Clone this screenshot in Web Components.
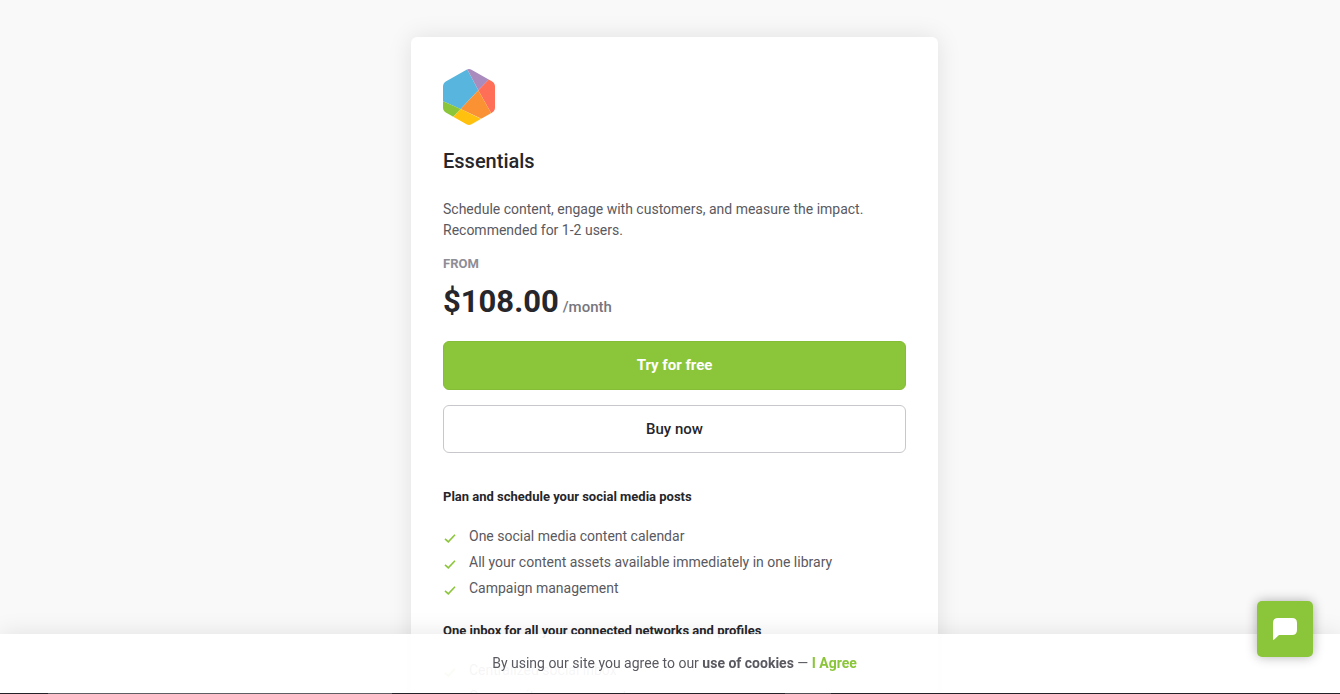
<!DOCTYPE html>
<html lang="en">
<head>
<meta charset="utf-8">
<meta name="viewport" content="width=device-width, initial-scale=1">
<title>Essentials plan</title>
<style>
  html { scrollbar-width: none; background: #f9f9f9; }
  body {
    margin: 0;
    font: 14px/21px Roboto, "Liberation Sans", sans-serif;
    color: #5a5960;
    --ink: #26262b;
    --green: #8bc53a;
    --gutter: 9px;
  }
</style>
</head>
<body>
<pricing-page>
  <plan-card>
    <plan-logo slot="logo"></plan-logo>
    <span slot="name">Essentials</span>
    <span slot="summary">Schedule content, engage with customers, and measure the impact. Recommended for 1-2 users.</span>
    <span slot="price">$108.00</span>
    <span slot="period">/month</span>
    <action-button slot="actions" primary>Try for free</action-button>
    <action-button slot="actions">Buy now</action-button>
    <feature-group>
      <span slot="title">Plan and schedule your social media posts</span>
      <feature-item>One social media content calendar</feature-item>
      <feature-item>All your content assets available immediately in one library</feature-item>
      <feature-item>Campaign management</feature-item>
    </feature-group>
    <feature-group>
      <span slot="title">One inbox for all your connected networks and profiles</span>
      <feature-item>Centralized social inbox</feature-item>
      <feature-item>Community management</feature-item>
    </feature-group>
  </plan-card>
</pricing-page>
<cookie-bar></cookie-bar>
<chat-launcher></chat-launcher>

<script>
  const define = (name, html) => {
    const template = document.createElement('template');
    template.innerHTML = html;
    customElements.define(name, class extends HTMLElement {
      constructor() {
        super();
        this.attachShadow({ mode: 'open' }).append(template.content.cloneNode(true));
      }
    });
  };

  define('pricing-page', `
    <style>
      :host { display: block; }
      main { display: flex; justify-content: center; padding: 37px 0 48px var(--gutter); }
    </style>
    <main><slot></slot></main>`);

  define('plan-card', `
    <style>
      :host {
        display: block; box-sizing: border-box; width: 100%; max-width: 527px;
        padding: 32px; border-radius: 6px; background: #fff;
        box-shadow: 0 0 24px rgba(0, 0, 0, .1);
      }
      h1 { margin: 24px 0 26px; font-size: 20px; line-height: 24px; font-weight: 500; color: var(--ink); }
      p { margin: 0; }
      .from { margin-top: 12px; font-size: 13px; line-height: 21px; font-weight: 700; color: #8e8d96; }
      .price { display: flex; align-items: baseline; gap: 4px; margin-top: 8px; line-height: 40px; }
      .amount { font-size: 31px; font-weight: 700; color: var(--ink); }
      .period { font-size: 15px; font-weight: 500; color: #77767c; }
      .actions { display: grid; gap: 15px; margin: 14px 0 33px; }
      .features { display: grid; gap: 21px; }
    </style>
    <slot name="logo"></slot>
    <h1><slot name="name"></slot></h1>
    <p><slot name="summary"></slot></p>
    <p class="from">FROM</p>
    <p class="price"><span class="amount"><slot name="price"></slot></span><span class="period"><slot name="period"></slot></span></p>
    <div class="actions"><slot name="actions"></slot></div>
    <div class="features"><slot></slot></div>`);

  define('plan-logo', `
    <style>
      :host { display: block; width: 52px; height: 56px; }
      svg { display: block; }
    </style>
    <svg width="52" height="56" viewBox="0 0 52 56" aria-hidden="true">
      <defs><clipPath id="hex"><path d="M23.500.7Q26-.7 28.500.7L48.800 12.200Q52 14 52 17.500V38.500Q52 42 48.800 43.800L28.500 55.300Q26 56.700 23.500 55.300L3.200 43.800Q0 42 0 38.500V17.500Q0 14 3.200 12.200Z"/></clipPath></defs>
      <g clip-path="url(#hex)">
        <path fill="#58b5dd" d="M-2-2H23L35.300 21.300L17.600 40L-2 31.300Z"/>
        <path fill="#a98bbd" d="M23-2H58L35.300 21.300Z"/>
        <path fill="#ff6f57" d="M35.300 21.300L56 0V58Z"/>
        <path fill="#fa9233" d="M35.300 21.300L56 58L17.600 40Z"/>
        <path fill="#ffc10d" d="M17.600 40L56 58.500L36 60H-1Z"/>
        <path fill="#8bc53a" d="M-2 31.300L17.600 40L-2 60.500Z"/>
      </g>
    </svg>`);

  define('action-button', `
    <style>
      :host { display: block; }
      button {
        display: block; width: 100%; height: 48px; padding: 0; cursor: pointer;
        border: 1px solid #c8c8cc; border-radius: 6px; background: #fff;
        font: 500 15px/21px Roboto, "Liberation Sans", sans-serif; color: var(--ink);
      }
      :host([primary]) button { height: 49px; border-color: #85bd36; background: var(--green); color: #fff; font-weight: 700; }
    </style>
    <button type="button"><slot></slot></button>`);

  define('feature-group', `
    <style>
      :host { display: block; }
      h2 { margin: 0 0 19px; font-size: 13px; line-height: 21px; font-weight: 700; color: var(--ink); }
      .items { display: grid; gap: 5px; }
    </style>
    <h2><slot name="title"></slot></h2>
    <div class="items" role="list"><slot></slot></div>`);

  define('feature-item', `
    <style>
      :host { display: grid; grid-template-columns: 14px 1fr; gap: 12px; }
      svg { display: block; margin-top: 4px; }
    </style>
    <svg width="14" height="16" viewBox="0 0 14 16" aria-hidden="true"><path d="M2 8.800L5.300 11.800L12 4.800" fill="none" stroke="#8bc53a" stroke-width="1.600"/></svg>
    <span role="listitem"><slot></slot></span>`);

  define('cookie-bar', `
    <style>
      :host {
        position: fixed; inset: auto 0 0 0; display: block;
        background: rgba(255, 255, 255, .94);
        box-shadow: 0 0 24px rgba(0, 0, 0, .1);
      }
      p { margin: 0; padding: 19px 0 19px var(--gutter); text-align: center; }
      a { font-weight: 700; color: inherit; text-decoration: none; }
      .agree { color: var(--green); }
      .edge {
        height: 1px;
        background:
          linear-gradient(#5f5e62, #5f5e62) 48px 0 / 344px 1px no-repeat,
          linear-gradient(#504f53, #504f53) 785px 0 / 46px 1px no-repeat,
          #232227;
      }
    </style>
    <p>By using our site you agree to our <a href="#cookies">use of cookies</a> — <a class="agree" href="#agree">I Agree</a></p>
    <div class="edge"></div>`);

  define('chat-launcher', `
    <style>
      :host { position: fixed; right: 27px; bottom: 37px; display: block; }
      button {
        display: grid; place-items: center; width: 56px; height: 56px; padding: 0; cursor: pointer;
        border: 0; border-radius: 5px; background: var(--green);
        box-shadow: 0 0 12px rgba(0, 0, 0, .3);
      }
    </style>
    <button type="button" aria-label="Open chat">
      <svg width="24" height="22" viewBox="0 0 24 22" aria-hidden="true"><path fill="#fff" d="M5 0H19Q24 0 24 5V12Q24 17 19 17H6L1.200 21.600Q0 22.500 0 21V5Q0 0 5 0Z"/></svg>
    </button>`);
</script>
</body>
</html>
